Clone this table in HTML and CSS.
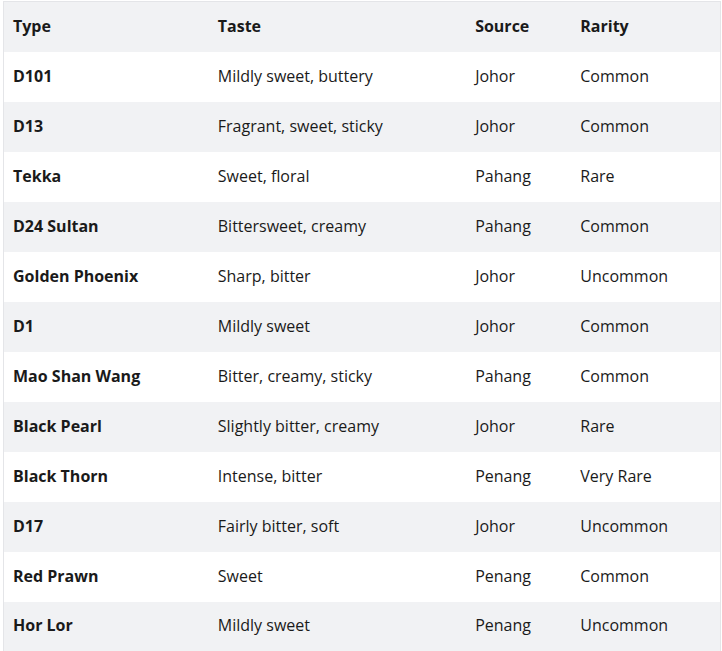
FILE: index.html
```html
<!DOCTYPE html>
<html>
<head>
<meta charset="utf-8">
<link rel="stylesheet" href="styles.css">
</head>
<body>
<div class="wrap">
<table class="durian">
<colgroup>
<col class="c1"><col class="c2"><col class="c3"><col class="c4">
</colgroup>
<thead>
<tr><th>Type</th><th>Taste</th><th>Source</th><th>Rarity</th></tr>
</thead>
<tbody>
<tr><td class="name">D101</td><td>Mildly sweet, buttery</td><td>Johor</td><td>Common</td></tr>
<tr><td class="name">D13</td><td>Fragrant, sweet, sticky</td><td>Johor</td><td>Common</td></tr>
<tr><td class="name">Tekka</td><td>Sweet, floral</td><td>Pahang</td><td>Rare</td></tr>
<tr><td class="name">D24 Sultan</td><td>Bittersweet, creamy</td><td>Pahang</td><td>Common</td></tr>
<tr><td class="name">Golden Phoenix</td><td>Sharp, bitter</td><td>Johor</td><td>Uncommon</td></tr>
<tr><td class="name">D1</td><td>Mildly sweet</td><td>Johor</td><td>Common</td></tr>
<tr><td class="name">Mao Shan Wang</td><td>Bitter, creamy, sticky</td><td>Pahang</td><td>Common</td></tr>
<tr><td class="name">Black Pearl</td><td>Slightly bitter, creamy</td><td>Johor</td><td>Rare</td></tr>
<tr><td class="name">Black Thorn</td><td>Intense, bitter</td><td>Penang</td><td>Very Rare</td></tr>
<tr><td class="name">D17</td><td>Fairly bitter, soft</td><td>Johor</td><td>Uncommon</td></tr>
<tr><td class="name">Red Prawn</td><td>Sweet</td><td>Penang</td><td>Common</td></tr>
<tr><td class="name">Hor Lor</td><td>Mildly sweet</td><td>Penang</td><td>Uncommon</td></tr>
</tbody>
</table>
</div>
</body>
</html>
```
FILE: styles.css
```css
html, body {
  margin: 0;
  padding: 0;
  background: #ffffff;
}
body {
  font-family: "Open Sans", "Noto Sans", sans-serif;
  color: #1a1a1a;
  font-size: 16px;
}
.wrap {
  padding: 1px 0 0 3px;
}
.durian {
  width: 718px;
  border-collapse: collapse;
  table-layout: fixed;
  border: 1px solid #e4e5e8;
}
.c1 { width: 205px; }
.c2 { width: 257px; }
.c3 { width: 105px; }
.c4 { width: 149px; }
.durian th,
.durian td {
  height: 50px;
  box-sizing: border-box;
  padding: 0 9px 2px;
  text-align: left;
  vertical-align: middle;
  line-height: 24px;
  white-space: nowrap;
}
.durian th {
  font-weight: 700;
}
.durian thead tr {
  background: #f1f2f4;
}
.durian tbody tr:nth-child(even) {
  background: #f1f2f4;
}
.durian td.name {
  font-weight: 700;
}
```
